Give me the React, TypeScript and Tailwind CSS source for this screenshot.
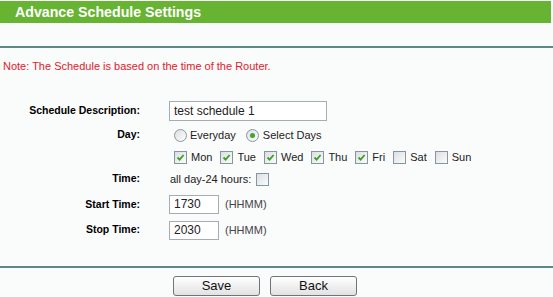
import React from 'react';

const Check: React.FC<{ on?: boolean }> = ({ on }) => (
  <span className="w-[13px] h-[13px] border border-[#8795a1] bg-gradient-to-br from-[#dcdfe2] to-[#fbfbfb] flex items-center justify-center shrink-0">
    {on && (
      <svg width="9" height="9" viewBox="0 0 9 9">
        <path d="M1.5 4.5 L3.6 6.6 L7.6 2" fill="none" stroke="#3e9e2c" strokeWidth="1.8" />
      </svg>
    )}
  </span>
);

const Radio: React.FC<{ on?: boolean }> = ({ on }) => (
  <span className="w-[13px] h-[13px] rounded-full border border-[#8a96a0] bg-gradient-to-br from-[#dde0e3] to-[#fcfcfc] flex items-center justify-center shrink-0">
    {on && <span className="w-[5px] h-[5px] rounded-full bg-[#45a332]" />}
  </span>
);

const Row: React.FC<{ label: string; h: string; children: React.ReactNode }> = ({ label, h, children }) => (
  <div className={`flex items-center ${h}`}>
    <div className="w-[140px] text-right font-bold text-[10.5px] text-black">{label}</div>
    <div className="ml-[29px] flex items-center text-[11px] text-[#222]">{children}</div>
  </div>
);

const days: [string, boolean][] = [
  ['Mon', true],
  ['Tue', true],
  ['Wed', true],
  ['Thu', true],
  ['Fri', true],
  ['Sat', false],
  ['Sun', false],
];

const App: React.FC = () => {
  return (
    <div className="w-[553px] h-[297px] overflow-hidden bg-[#fafbfb] font-['Liberation_Sans',Arial,sans-serif]">
      <div className="mt-[1px] mr-[2px] h-[22px] bg-[#67b332] pl-[15px] text-white font-bold text-[14.2px] leading-[22px]">
        Advance Schedule Settings
      </div>
      <div className="h-[23px]" />
      <div className="h-[2px] bg-[#5c8a83]" />
      <div className="mt-[11px] pl-[3px] text-[11px] leading-[14px] text-[#e2202c]">
        Note: The Schedule is based on the time of the Router.
      </div>

      <div className="mt-[26px]">
        <Row label="Schedule Description:" h="h-[24px]">
          <div className="w-[158px] h-[20px] border border-[#a5acb2] bg-white pl-[4px] text-[12px] leading-[18px] text-[#222]">
            test schedule 1
          </div>
        </Row>
        <Row label="Day:" h="h-[24px]">
          <span className="ml-[5px]"><Radio /></span>
          <span className="ml-[3px]">Everyday</span>
          <span className="ml-[10px]"><Radio on /></span>
          <span className="ml-[4px]">Select Days</span>
        </Row>
        <Row label="" h="h-[20px]">
          <div className="ml-[5px] flex items-center gap-[8px]">
            {days.map(([d, on]) => (
              <span key={d} className="flex items-center gap-[4px]">
                <Check on={on} />
                <span>{d}</span>
              </span>
            ))}
          </div>
        </Row>
        <Row label="Time:" h="h-[24px]">
          <span className="ml-[1px]">all day-24 hours:</span>
          <span className="ml-[5px]"><Check /></span>
        </Row>
        <Row label="Start Time:" h="h-[27px]">
          <div className="w-[50px] h-[19px] border border-[#a5acb2] bg-white pl-[4px] text-[12px] leading-[17px] text-[#222]">
            1730
          </div>
          <span className="ml-[6px] text-[#444]">(HHMM)</span>
        </Row>
        <Row label="Stop Time:" h="h-[24px]">
          <div className="w-[50px] h-[19px] border border-[#a5acb2] bg-white pl-[4px] text-[12px] leading-[17px] text-[#222]">
            2030
          </div>
          <span className="ml-[6px] text-[#444]">(HHMM)</span>
        </Row>
      </div>

      <div className="mt-[24px] h-[2px] bg-[#5c8a83]" />
      <div className="mt-[8px] pl-[173px] flex gap-[10px]">
        <button className="w-[87px] h-[20px] rounded-[3px] border border-[#6f7479] bg-gradient-to-b from-white to-[#e2e2e2] text-[13px] leading-[18px] text-[#111]">
          Save
        </button>
        <button className="w-[87px] h-[20px] rounded-[3px] border border-[#6f7479] bg-gradient-to-b from-white to-[#e2e2e2] text-[13px] leading-[18px] text-[#111]">
          Back
        </button>
      </div>
    </div>
  );
};

export default App;
